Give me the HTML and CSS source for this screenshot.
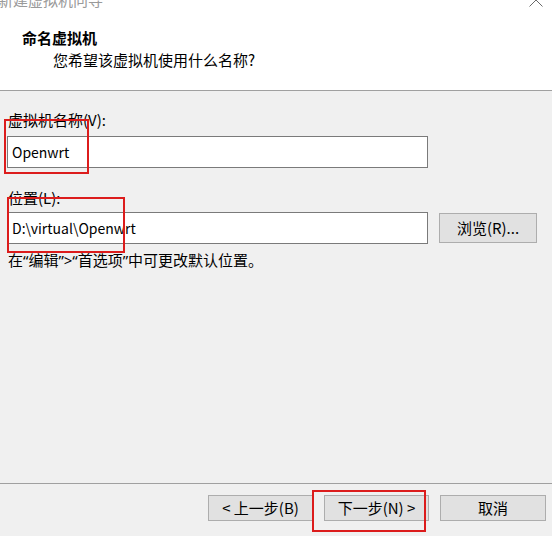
FILE: index.html
```html
<!DOCTYPE html>
<html lang="zh-CN">
<head>
<meta charset="utf-8">
<title>新建虚拟机向导</title>
<link rel="stylesheet" href="styles.css">
</head>
<body>
<div class="window">
  <div class="header">
    <div class="titlebar">
      <span class="title-text">新建虚拟机向导</span>
      <svg class="close" width="14" height="14" viewBox="0 0 14 14"><path d="M0.5 0.5 L13.5 13.5 M13.5 0.5 L0.5 13.5" stroke="#6a6a6a" stroke-width="1" fill="none"/></svg>
    </div>
    <div class="page-title">命名虚拟机</div>
    <div class="page-subtitle">您希望该虚拟机使用什么名称?</div>
  </div>
  <div class="main">
    <label class="label">虚拟机名称(V):</label>
    <input class="field field-name" type="text" value="Openwrt">
    <label class="label label-loc">位置(L):</label>
    <div class="row">
      <input class="field" type="text" value="D:\virtual\Openwrt">
      <button class="btn btn-browse">浏览(R)...</button>
    </div>
    <div class="hint">在“编辑”&gt;“首选项”中可更改默认位置。</div>
  </div>
  <div class="footer">
    <button class="btn btn-nav">&lt; 上一步(B)</button>
    <button class="btn btn-nav">下一步(N) &gt;</button>
    <button class="btn btn-nav btn-cancel">取消</button>
  </div>
  <div class="mark mark-name"></div>
  <div class="mark mark-loc"></div>
  <div class="mark mark-next"></div>
</div>
</body>
</html>
```
FILE: styles.css
```css
* { box-sizing: border-box; }
html, body { margin: 0; padding: 0; }
body {
  width: 552px;
  height: 536px;
  overflow: hidden;
  font-family: "Noto Sans CJK SC", "Noto Sans", sans-serif;
  font-size: 15px;
  color: #000;
}
.window {
  position: relative;
  width: 552px;
  height: 536px;
  display: flex;
  flex-direction: column;
  background: #f0f0f0;
  overflow: hidden;
}
.header {
  display: flex;
  flex-direction: column;
  height: 91px;
  background: #fff;
  border-bottom: 1px solid #a0a0a0;
  flex: none;
}
.titlebar {
  display: flex;
  justify-content: space-between;
  align-items: center;
  height: 16px;
  margin-top: -8px;
  line-height: 16px;
  color: #9a9a9a;
  padding-right: 9px;
}
.title-text { margin-left: -2px; }
.close { display: block; }
.page-title {
  margin-top: 22px;
  padding-left: 22px;
  line-height: 16px;
  font-weight: bold;
}
.page-subtitle {
  margin-top: 6px;
  padding-left: 53px;
  line-height: 16px;
}
.main {
  flex: 1;
  display: flex;
  flex-direction: column;
  align-items: flex-start;
  padding: 21px 0 0 7px;
}
.label {
  display: block;
  line-height: 16px;
  margin-left: 1px;
}
.label-loc { margin-top: 22px; }
.field {
  display: block;
  width: 421px;
  height: 32px;
  margin: 8px 0 0 0;
  padding: 0 4px;
  border: 1px solid #7a7a7a;
  background: #fff;
  font-family: "Noto Sans CJK SC", "Noto Sans", sans-serif;
  font-size: 14px;
  color: #000;
  outline: none;
}
.row {
  display: flex;
  align-items: center;
  gap: 11px;
  margin-top: 6px;
}
.row .field { margin: 0; }
.btn {
  display: flex;
  align-items: center;
  justify-content: center;
  padding: 0;
  background: #e1e1e1;
  border: 1px solid #adadad;
  font-family: "Noto Sans CJK SC", "Noto Sans", sans-serif;
  font-size: 15px;
  color: #000;
  line-height: 16px;
}
.btn-browse {
  width: 98px;
  height: 30px;
}
.hint {
  margin-top: 8px;
  margin-left: 1px;
  line-height: 16px;
  font-family: "Noto Sans", "Noto Sans CJK SC", sans-serif;
}
.footer {
  flex: none;
  height: 53px;
  border-top: 1px solid #a0a0a0;
  display: flex;
  justify-content: flex-end;
  align-items: flex-start;
  gap: 11px;
  padding: 11px 6px 0 0;
}
.btn-nav {
  width: 105px;
  height: 26px;
}
.btn-cancel { width: 106px; }
.mark {
  position: absolute;
  border: 2px solid #dc1c1c;
}
.mark-name { left: 4px; top: 119px; width: 85px; height: 55px; }
.mark-loc { left: 7px; top: 197px; width: 118px; height: 56px; }
.mark-next { left: 312px; top: 490px; width: 114px; height: 42px; }
```
